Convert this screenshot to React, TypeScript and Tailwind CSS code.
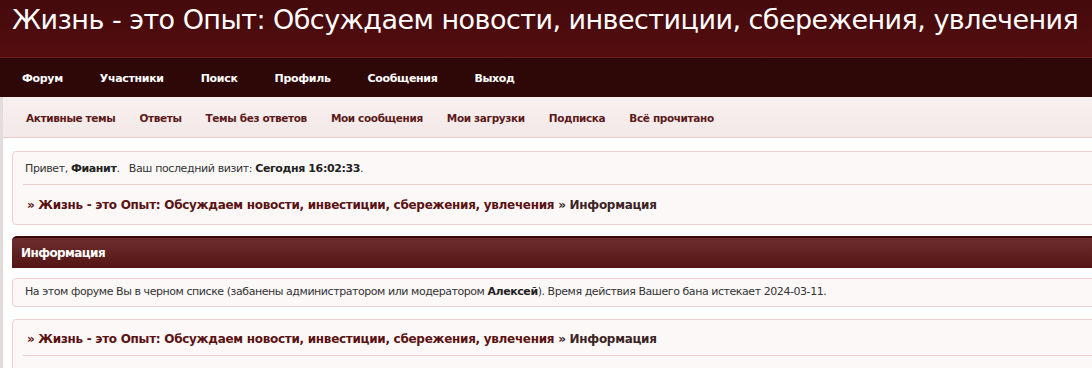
import React from 'react';

const mainNav = ['Форум', 'Участники', 'Поиск', 'Профиль', 'Сообщения', 'Выход'];
const subNav = ['Активные темы', 'Ответы', 'Темы без ответов', 'Мои сообщения', 'Мои загрузки', 'Подписка', 'Всё прочитано'];

function Crumbs() {
  return (
    <div className="text-[12px] font-bold text-[#5a1212] whitespace-nowrap tracking-[-0.024em]">
      » Жизнь - это Опыт: Обсуждаем новости, инвестиции, сбережения, увлечения{' '}
      <span className="text-[#3b2424]">» Информация</span>
    </div>
  );
}

export default function App() {
  return (
    <div className="w-[1092px] h-[368px] overflow-hidden bg-white font-['DejaVu_Sans',sans-serif]">
      <header className="h-[58px] bg-gradient-to-b from-[#440a0c] to-[#540d0f] border-b border-[#6b1d1d] pl-[12px] pt-[3px]">
        <h1 className="text-[27px] leading-[34px] text-white whitespace-nowrap tracking-[-0.02em]">
          Жизнь - это Опыт: Обсуждаем новости, инвестиции, сбережения, увлечения
        </h1>
      </header>
      <nav className="h-[39px] bg-[#2e0707] flex items-center pl-[22px] pt-[3px] gap-[37px] text-[11px] font-bold text-white tracking-[-0.03em]">
        {mainNav.map((n) => (
          <a key={n} href="#">{n}</a>
        ))}
      </nav>
      <div className="border-l-[3px] border-[#e3dcdc]">
        <div className="h-[41px] bg-gradient-to-b from-[#f8f0f0] to-[#f4e8e8] border-b border-[#ebcaca] flex items-center pl-[23px] pt-[3px] gap-[24px] text-[10.5px] font-bold text-[#5c1a1a] tracking-[-0.035em]">
          {subNav.map((n) => (
            <a key={n} href="#">{n}</a>
          ))}
        </div>
        <div className="pl-[9px] pt-[13px] flex flex-col w-[1200px]">
          <div className="bg-[#fcf8f8] border border-[#efd0d0] rounded-[4px] px-[10px]">
            <div className="h-[33px] flex items-center pl-[2px] text-[11px] text-[#333] border-b border-[#efcfcf] tracking-[-0.035em] pt-[2px]">
              <span>Привет, <b className="text-[#222]">Фианит</b>.&nbsp;&nbsp; Ваш последний визит: <b className="text-[#222]">Сегодня 16:02:33</b>.</span>
            </div>
            <div className="h-[39px] flex items-center pl-[4px] pt-[1px]">
              <Crumbs />
            </div>
          </div>
          <div className="mt-[11px] h-[32px] bg-gradient-to-b from-[#6b2e2e] to-[#551414] border-t-2 border-[#3a0a0a] rounded-t-[5px] flex items-center pl-[9px] text-[12px] font-bold text-white tracking-[-0.05em]">
            Информация
          </div>
          <div className="mt-[10px] h-[29px] bg-[#fcf8f8] border border-[#efd0d0] rounded-[4px] px-[12px] flex items-center text-[11px] text-[#333] tracking-[-0.04em]">
            <span>На этом форуме Вы в черном списке (забанены администратором или модератором <b className="text-[#222]">Алексей</b>). Время действия Вашего бана истекает 2024-03-11.</span>
          </div>
          <div className="mt-[12px] h-[60px] bg-[#fcf8f8] border border-[#efd0d0] rounded-[4px] px-[10px]">
            <div className="h-[36px] flex items-center pl-[4px] pt-[2px] border-b border-[#efcfcf]">
              <Crumbs />
            </div>
          </div>
        </div>
      </div>
    </div>
  );
}
